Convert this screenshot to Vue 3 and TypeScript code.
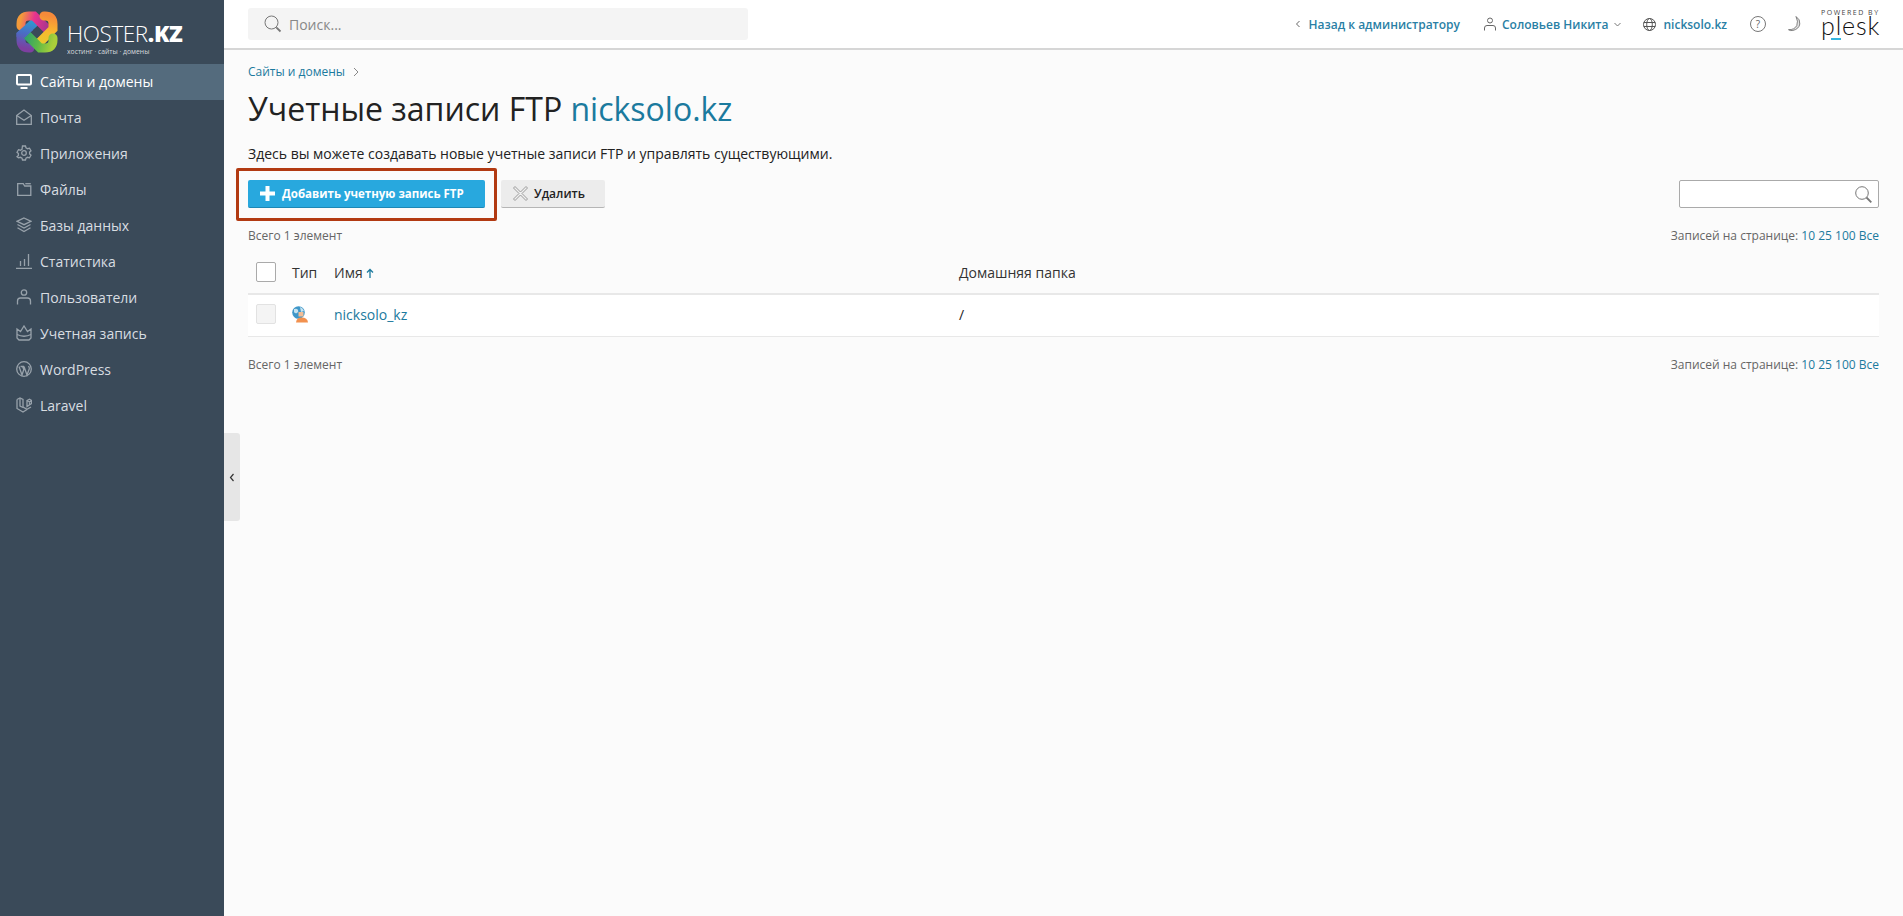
<script setup lang="ts">
const nav = [
  { label: 'Сайты и домены', icon: 'monitor', active: true },
  { label: 'Почта', icon: 'mail' },
  { label: 'Приложения', icon: 'gear' },
  { label: 'Файлы', icon: 'folder' },
  { label: 'Базы данных', icon: 'layers' },
  { label: 'Статистика', icon: 'stats' },
  { label: 'Пользователи', icon: 'user' },
  { label: 'Учетная запись', icon: 'crown' },
  { label: 'WordPress', icon: 'wp' },
  { label: 'Laravel', icon: 'laravel' }
]
</script>

<template>
  <div class="layout">
    <aside class="sidebar">
      <div class="logo">
        <svg class="logo-mark" width="42" height="42" viewBox="0 0 42 42" fill="none" stroke-width="9" stroke-linecap="round">
          <defs>
            <linearGradient id="bandA" gradientUnits="userSpaceOnUse" x1="4" y1="12" x2="32" y2="18">
              <stop offset="0" stop-color="#f39a3a" />
              <stop offset=".45" stop-color="#e8338e" />
              <stop offset="1" stop-color="#a5358f" />
            </linearGradient>
            <linearGradient id="bandB" gradientUnits="userSpaceOnUse" x1="30" y1="4" x2="24" y2="32">
              <stop offset="0" stop-color="#f58a3a" />
              <stop offset=".55" stop-color="#f8b92e" />
              <stop offset="1" stop-color="#e9c92e" />
            </linearGradient>
            <linearGradient id="bandC" gradientUnits="userSpaceOnUse" x1="38" y1="30" x2="10" y2="22">
              <stop offset="0" stop-color="#a9cf3a" />
              <stop offset=".5" stop-color="#5cb947" />
              <stop offset="1" stop-color="#2f9e6e" />
            </linearGradient>
            <linearGradient id="bandD" gradientUnits="userSpaceOnUse" x1="12" y1="38" x2="18" y2="10">
              <stop offset="0" stop-color="#7d3fa0" />
              <stop offset=".5" stop-color="#4b6bc4" />
              <stop offset="1" stop-color="#2e9ad0" />
            </linearGradient>
          </defs>
          <path d="M14 37H13Q5 37 5 29V24L20 10" stroke="url(#bandD)" />
          <path d="M5 15V13Q5 5 13 5H18L33 20" stroke="url(#bandA)" />
          <path d="M28 5H29Q37 5 37 13V18L22 33" stroke="url(#bandB)" />
          <path d="M37 27V29Q37 37 29 37H24L9 22" stroke="url(#bandC)" />
          <path d="M5 26V24L14 15.7" stroke="url(#bandD)" stroke-linecap="butt" />
        </svg>
        <div class="logo-text">
          <div class="logo-name">HOSTER<b>.KZ</b></div>
          <div class="logo-sub">хостинг · сайты · домены</div>
        </div>
      </div>
      <nav>
        <a v-for="item in nav" :key="item.label" class="nav-item" :class="{ active: item.active }">
          <svg class="nav-icon" width="16" height="16" viewBox="0 0 16 16" fill="none" stroke="currentColor" stroke-width="1.3">
            <template v-if="item.icon === 'monitor'">
              <rect x="1" y="2" width="14" height="9.5" rx="1" stroke-width="2" />
              <path d="M4.5 15h7" stroke-width="2" />
            </template>
            <template v-else-if="item.icon === 'mail'">
              <path d="M.7 6.500 8 1l7.300 5.500v8.800H.7z" />
              <path d="M.7 6.500 8 11.200l7.300-4.700" />
            </template>
            <template v-else-if="item.icon === 'gear'">
              <path d="M6.500 1h3l.5 1.800 1.600.9 1.900-.5 1.500 2.600-1.400 1.300v1.800l1.400 1.300-1.500 2.600-1.900-.5-1.600.9-.5 1.800h-3l-.5-1.800-1.600-.9-1.900.5L1 11.700l1.400-1.300V8.600L1 7.300l1.500-2.600 1.900.5 1.600-.9z" />
              <circle cx="8" cy="8" r="2.3" />
            </template>
            <template v-else-if="item.icon === 'folder'">
              <path d="M1.700 2.700h5.500l1.500 2.300h6.100v9.300H1.700z" />
              <path d="M9.300 2.700h5.500" />
            </template>
            <template v-else-if="item.icon === 'layers'">
              <path d="M8 1l7 3.300-7 3.400-7-3.400z" />
              <path d="M1.500 7.500 8 11l6.500-3.500" />
              <path d="M1.500 10.800 8 14.500l6.500-3.700" />
            </template>
            <template v-else-if="item.icon === 'stats'">
              <path d="M0 15.300h16M4.500 13V8M8.500 13V6M12.500 13V1" />
            </template>
            <template v-else-if="item.icon === 'user'">
              <circle cx="8" cy="3.5" r="2.7" />
              <path d="M1.500 15.500V12q0-3 3-3h7q3 0 3 3v3.500" />
            </template>
            <template v-else-if="item.icon === 'crown'">
              <path d="M1 4l3.500 2.500L8 1l3.500 5.500L15 4v9l-2 2H3l-2-2z" />
              <path d="M1 9.500q7 3.500 14 0" />
            </template>
            <template v-else-if="item.icon === 'wp'">
              <circle cx="8" cy="8" r="7.3" />
              <path d="M3 5.500 6 14l1.800-5.500L6.500 5.500M4.500 5.500h3.500M8 5.500 11 14l2.200-6q.3-1.500-.7-3" />
            </template>
            <template v-else>
              <path d="M1 2.500 4 1l3 1.500V10l4 2.300 4-2.300" />
              <path d="M1 2.500v9L7 15l4-2.500M4 1v8l3 1.500" />
              <path d="M11 3.500l2.500-1.300 2 1.300v3L11 9.500zM11 3.500 13.500 5l2-1.500M13.500 5v2.500" />
            </template>
          </svg>
          <span>{{ item.label }}</span>
        </a>
      </nav>
    </aside>

    <div class="body">
      <header class="topbar">
        <div class="search">
          <svg width="18" height="18" viewBox="0 0 18 18" fill="none" stroke="#777">
            <circle cx="7.5" cy="7.5" r="6.5" />
            <path d="M12.300 12.300l4.200 4.200" stroke-width="1.8" />
          </svg>
          <span>Поиск...</span>
        </div>
        <div class="top-links">
          <a class="top-link back">
            <svg width="6" height="8" viewBox="0 0 6 8" fill="none" stroke="#666"><path d="M4.500 1 1.500 4l3 3" /></svg>
            Назад к администратору
          </a>
          <a class="top-link user">
            <svg width="12" height="14" viewBox="0 0 12 14" fill="none" stroke="#666">
              <circle cx="6" cy="3.5" r="2.5" />
              <path d="M.5 13.500V11q0-2.500 2.500-2.500h6q2.500 0 2.500 2.500v2.500" />
            </svg>
            Соловьев Никита
            <svg width="7" height="5" viewBox="0 0 7 5" fill="none" stroke="#777"><path d="M.5 1 3.500 4l3-3" /></svg>
          </a>
          <a class="top-link domain">
            <svg width="13" height="13" viewBox="0 0 13 13" fill="none" stroke="#555">
              <circle cx="6.5" cy="6.5" r="6" />
              <ellipse cx="6.5" cy="6.5" rx="2.8" ry="6" />
              <path d="M.8 4.500h11.400M.8 8.500h11.400" />
            </svg>
            nicksolo.kz
          </a>
          <svg class="help" width="16" height="16" viewBox="0 0 16 16" fill="none">
            <circle cx="8" cy="8" r="7.5" stroke="#777" />
            <text x="8" y="11.5" text-anchor="middle" class="help-mark">?</text>
          </svg>
          <svg class="moon" width="13" height="16" viewBox="0 0 13 16">
            <path d="M8 .5q4.500 3 3.800 7.500-.8 5-7 6.500-2.500.5-4.300-.8 6 .2 8.300-4.200Q10.500 5.500 8 .5z" fill="#e4e4e4" stroke="#666" stroke-width=".8" />
          </svg>
          <div class="plesk">
            <div class="powered">POWERED BY</div>
            <div class="plesk-name">plesk</div>
            <i class="plesk-bar"></i>
          </div>
        </div>
      </header>

      <main class="content">
        <div class="crumbs">
          <a>Сайты и домены</a>
          <svg width="6" height="10" viewBox="0 0 6 10" fill="none" stroke="#888"><path d="M1 1l4 4-4 4" /></svg>
        </div>
        <h1>Учетные записи FTP <a>nicksolo.kz</a></h1>
        <p class="hint">Здесь вы можете создавать новые учетные записи FTP и управлять существующими.</p>

        <div class="toolbar">
          <div class="tool-left">
            <button class="btn primary">
              <svg width="15" height="15" viewBox="0 0 15 15"><path d="M5.500 0h4v5.500H15v4H9.500V15h-4V9.500H0v-4h5.500z" fill="#fff" /></svg>
              Добавить учетную запись FTP
            </button>
            <button class="btn remove">
              <svg width="15" height="15" viewBox="0 0 15 15" fill="#f0f0f0" stroke="#999">
                <path d="M2 .5 7.500 6 13 .5 14.500 2 9 7.500l5.500 5.500-1.500 1.500L7.500 9 2 14.500.5 13 6 7.500.5 2z" />
              </svg>
              Удалить
            </button>
            <div class="callout"></div>
          </div>
          <div class="filter">
            <svg width="17" height="17" viewBox="0 0 17 17" fill="none" stroke="#777">
              <circle cx="7" cy="7" r="6.3" />
              <path d="M11.500 11.500l4.800 4.800" stroke-width="1.8" />
            </svg>
          </div>
        </div>

        <div class="pager">
          <span>Всего 1 элемент</span>
          <span>Записей на странице: <a>10</a> <a>25</a> <a>100</a> <a>Все</a></span>
        </div>

        <div class="table">
          <div class="row head">
            <span class="cell-check"><i class="box"></i></span>
            <span class="cell-type">Тип</span>
            <span class="cell-name">Имя
              <svg width="8" height="10" viewBox="0 0 8 10" fill="none" stroke="#1b7a9e" stroke-width="1.3"><path d="M4 10V2M1 4.500 4 1.500l3 3" /></svg>
            </span>
            <span class="cell-home">Домашняя папка</span>
          </div>
          <div class="row item">
            <span class="cell-check"><i class="box off"></i></span>
            <span class="cell-type">
              <svg width="16" height="17" viewBox="0 0 16 17">
                <circle cx="6.5" cy="6.5" r="6.3" fill="#3f97c9" />
                <path d="M2 3q3-1 4 1t-1 3-3-1zM8 1q3 1 4 4L9 6z" fill="#c6e3f0" />
                <path d="M6.500 6h5v4.500h-5z" fill="#f3bd95" />
                <path d="M4 16.500q.5-5 5.500-5 6 0 6.500 5z" fill="#f2914f" />
              </svg>
            </span>
            <a class="cell-name">nicksolo_kz</a>
            <span class="cell-home">/</span>
          </div>
        </div>

        <div class="pager bottom">
          <span>Всего 1 элемент</span>
          <span>Записей на странице: <a>10</a> <a>25</a> <a>100</a> <a>Все</a></span>
        </div>
      </main>

      <div class="collapse">
        <svg width="6" height="9" viewBox="0 0 6 9" fill="none" stroke="#333" stroke-width="1.2"><path d="M4.500 1 1.500 4.500l3 3.500" /></svg>
      </div>
    </div>
  </div>
</template>

<style>
html, body { margin: 0; height: 100%; }
#app { height: 100%; }
</style>

<style scoped>
.layout { display: flex; height: 916px; overflow: hidden; font-family: "Open Sans", "Liberation Sans", sans-serif; font-size: 13px; color: #222; }
a { color: #1b7a9e; text-decoration: none; }

.sidebar { width: 224px; flex: none; background: #3a4a59; color: #dfe4e8; }
.logo { height: 64px; box-sizing: border-box; padding: 11px 0 0 16px; display: flex; gap: 9px; }
.logo-mark { flex: none; }
.logo-text { color: #fff; padding-top: 11px; }
.logo-name { font-size: 22.5px; font-weight: 300; line-height: 24px; letter-spacing: -.4px; white-space: nowrap; }
.logo-name b { font-weight: 800; }
.logo-sub { font-size: 6.8px; line-height: 9px; color: #d6dade; margin-top: 1px; white-space: nowrap; }
.nav-item { display: flex; align-items: center; height: 36px; box-sizing: border-box; padding: 0 0 2px 16px; gap: 8px; font-size: 14px; color: #d8dde1; }
.nav-item.active { background: #546b7d; color: #fff; }
.nav-icon { flex: none; color: #98a2ab; }
.active .nav-icon { color: #fff; }

.body { flex: 1; min-width: 0; display: flex; flex-direction: column; position: relative; background: #fbfbfb; }
.topbar { height: 50px; flex: none; box-sizing: border-box; background: #fff; border-bottom: 2px solid #d6d6d6; padding: 8px 24px 0; display: flex; justify-content: space-between; align-items: flex-start; }
.search { width: 500px; height: 32px; box-sizing: border-box; background: #f4f4f4; border-radius: 3px; padding-left: 16px; display: flex; align-items: center; gap: 7px; font-size: 14px; color: #888; }
.top-links { display: flex; align-items: center; height: 32px; }
.top-link { display: flex; align-items: center; font-size: 12px; font-weight: 600; color: #2a7fa5; white-space: nowrap; }
.back { gap: 7px; margin-right: 24px; }
.user { gap: 6px; margin-right: 22px; }
.domain { gap: 7px; margin-right: 23px; }
.help { margin-right: 22px; }
.help-mark { font-size: 10px; fill: #666; font-family: "Open Sans", sans-serif; }
.moon { margin-right: 20px; }
.plesk { position: relative; width: 58px; height: 32px; color: #111; }
.powered { font-size: 7px; line-height: 9px; letter-spacing: 1.5px; color: #444; white-space: nowrap; }
.plesk-name { font-family: Lato, sans-serif; font-size: 25px; font-weight: 300; line-height: 14px; letter-spacing: .9px; margin-top: 1px; }
.plesk-bar { position: absolute; left: 10px; top: 30px; width: 10px; height: 2px; background: #35b5de; }

.content { flex: 1; padding: 14px 24px 0; }
.crumbs { display: flex; align-items: center; gap: 8px; font-size: 12px; line-height: 16px; }
h1 { margin: 9px 0 0; font-size: 32px; font-weight: 400; line-height: 40px; color: #222; }
.hint { margin: 15px 0 0; font-size: 14px; line-height: 20px; color: #222; }

.toolbar { display: flex; justify-content: space-between; margin-top: 16px; height: 28px; }
.tool-left { display: flex; gap: 16px; position: relative; }
.btn { display: flex; align-items: center; height: 28px; box-sizing: border-box; padding: 0 12px; gap: 7px; border: 0; border-bottom: 1px solid #b5b5b5; border-radius: 2px; background: #ececec; font: 600 12px "Open Sans", sans-serif; color: #222; }
.btn.remove { width: 104px; gap: 6px; }
.btn.primary { width: 237px; background: #28a8de; border-bottom-color: #1d87b5; color: #fff; font-weight: 700; font-size: 11.5px; }
.callout { position: absolute; left: -12px; top: -12px; width: 261px; height: 53px; box-sizing: border-box; border: 3px solid #b23a12; border-radius: 2px; }
.filter { width: 200px; height: 28px; box-sizing: border-box; background: #fff; border: 1px solid #aaa; border-radius: 2px; display: flex; align-items: center; justify-content: flex-end; padding-right: 6px; }

.pager { display: flex; justify-content: space-between; margin-top: 19px; font-size: 12px; line-height: 18px; color: #666; }
.table { margin-top: 7px; }
.row { display: flex; align-items: center; font-size: 14px; box-sizing: border-box; }
.row.head { height: 43px; border-bottom: 2px solid #e8e8e8; color: #333; padding-bottom: 1px; }
.row.item { height: 42px; background: #fff; border-bottom: 1px solid #e8e8e8; padding-bottom: 3px; }
.cell-check { width: 44px; padding-left: 8px; box-sizing: border-box; display: flex; }
.cell-type { width: 42px; display: flex; }
.cell-name { width: 625px; }
.box { width: 20px; height: 20px; box-sizing: border-box; background: #fff; border: 1px solid #aaa; border-radius: 2px; }
.box.off { background: #f4f4f4; border-color: #e2e2e2; }

.collapse { position: absolute; left: 0; top: 433px; width: 16px; height: 88px; background: #e6e6e6; border-radius: 0 3px 3px 0; display: flex; align-items: center; justify-content: center; }
</style>
